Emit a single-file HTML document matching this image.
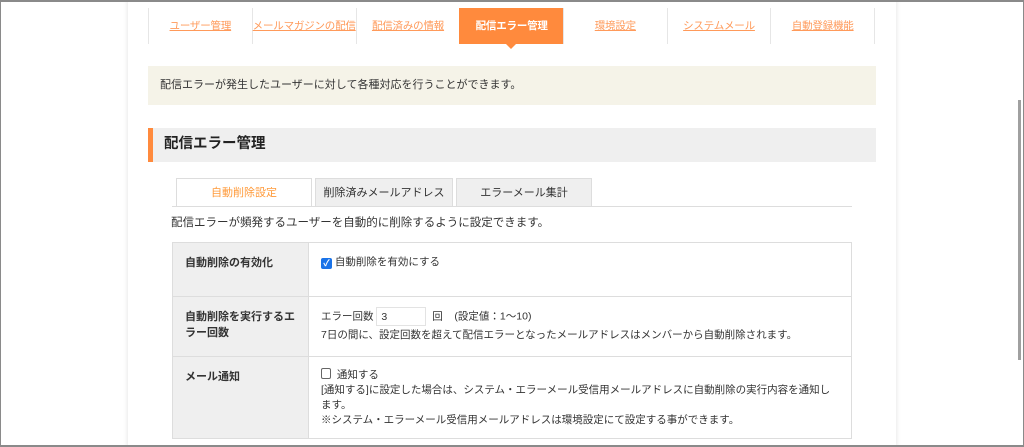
<!DOCTYPE html>
<html><head><meta charset="utf-8"><style>
*{margin:0;padding:0;box-sizing:border-box}
body{width:1024px;height:447px;overflow:hidden;background:#fff;font-family:"Liberation Sans","Noto Sans CJK JP",sans-serif;font-size:11px;color:#333;position:relative}
.frame{position:absolute;left:0;top:0;width:1024px;height:447px;border:1px solid #8a8a8a;border-top-width:2px;border-bottom-width:2px;z-index:10;pointer-events:none}
.main{position:absolute;left:128px;top:0;width:768px;height:447px;box-shadow:-2px 0 3px rgba(0,0,0,.06),2px 0 3px rgba(0,0,0,.06);background:#fff}
.a{position:absolute}
.nav{position:absolute;left:148px;top:8px;height:36px;width:727px;display:flex}
.nav div{flex:1;border-left:1px solid #e6e6e6;text-align:center;line-height:36px;color:#ff9a5a;text-decoration:underline;font-size:10.5px;white-space:nowrap;letter-spacing:-0.2px}
.nav div:last-child{border-right:1px solid #e6e6e6}
.nav div.on{background:#ff8a3d;color:#fff;text-decoration:none;font-weight:bold;border-left-color:#ff8a3d}
.tab{position:absolute;top:178px;height:29px;line-height:28px;text-align:center;font-size:11px;border:1px solid #ddd;border-bottom:none;background:#efefef}
td{border:1px solid #ddd;vertical-align:top;font-size:10.5px;line-height:15px;white-space:nowrap}
th{background:#efefef;border:1px solid #ddd;text-align:left;vertical-align:top;font-size:11px;line-height:16px;padding:12px 12px;font-weight:bold}
</style></head><body>
<div class="main"></div>
<div class="nav">
<div>ユーザー管理</div><div>メールマガジンの配信</div><div>配信済みの情報</div><div class="on">配信エラー管理</div><div>環境設定</div><div>システムメール</div><div>自動登録機能</div>
</div>
<div class="a" style="left:506px;top:44px;width:0;height:0;border-left:5px solid transparent;border-right:5px solid transparent;border-top:5px solid #ff8a3d"></div>
<div class="a" style="left:148px;top:66px;width:728px;height:39px;background:#f5f3e8;line-height:38px;padding-left:12px;font-size:11px">配信エラーが発生したユーザーに対して各種対応を行うことができます。</div>
<div class="a" style="left:148px;top:128px;width:728px;height:34px;background:#efefef;border-left:5px solid #ff8a3d;line-height:33px;padding-left:11px;font-size:14.5px;font-weight:bold;color:#222">配信エラー管理</div>
<div class="tab" style="left:176px;width:136px;background:#fff;color:#ff9a3a;height:30px">自動削除設定</div>
<div class="tab" style="left:315px;width:138px">削除済みメールアドレス</div>
<div class="tab" style="left:456px;width:136px">エラーメール集計</div>
<div class="a" style="left:172px;top:206px;width:680px;height:1px;background:#ddd"></div>
<div class="a" style="left:176px;top:207px;width:136px;height:1px;background:#fff"></div>
<div class="a" style="left:171px;top:214px;font-size:11.5px">配信エラーが頻発するユーザーを自動的に削除するように設定できます。</div>
<table class="a" style="left:172px;top:242px;width:680px;border-collapse:collapse">
<tr style="height:54px"><th style="width:136px">自動削除の有効化</th><td style="padding:12px 12px"><span style="display:inline-block;width:11px;height:11px;background:#1a73e8;border-radius:2px;color:#fff;font-size:9px;line-height:11px;text-align:center;vertical-align:-1px;font-weight:bold">✓</span> 自動削除を有効にする</td></tr>
<tr style="height:60px"><th>自動削除を実行するエ<br>ラー回数</th><td style="padding:10px 12px 0">エラー回数 <span style="display:inline-block;width:50px;height:19px;border:1px solid #e3e3e3;padding-left:4px;line-height:19px;vertical-align:middle">3</span> &nbsp;回 &nbsp;&nbsp;&nbsp;(設定値：1〜10)<br><span style="display:block;margin-top:2px">7日の間に、設定回数を超えて配信エラーとなったメールアドレスはメンバーから自動削除されます。</span></td></tr>
<tr style="height:82px"><th>メール通知</th><td style="padding:11px 12px 0"><span style="display:inline-block;width:10px;height:11px;border:1px solid #666;border-radius:2px;vertical-align:-1px"></span>&nbsp; 通知する<br>[通知する]に設定した場合は、システム・エラーメール受信用メールアドレスに自動削除の実行内容を通知し<br>ます。<br>※システム・エラーメール受信用メールアドレスは環境設定にて設定する事ができます。</td></tr>
</table>
<div class="a" style="left:1018px;top:100px;width:3px;height:260px;background:#a0a0a0"></div>
<div class="frame"></div>
</body></html>
